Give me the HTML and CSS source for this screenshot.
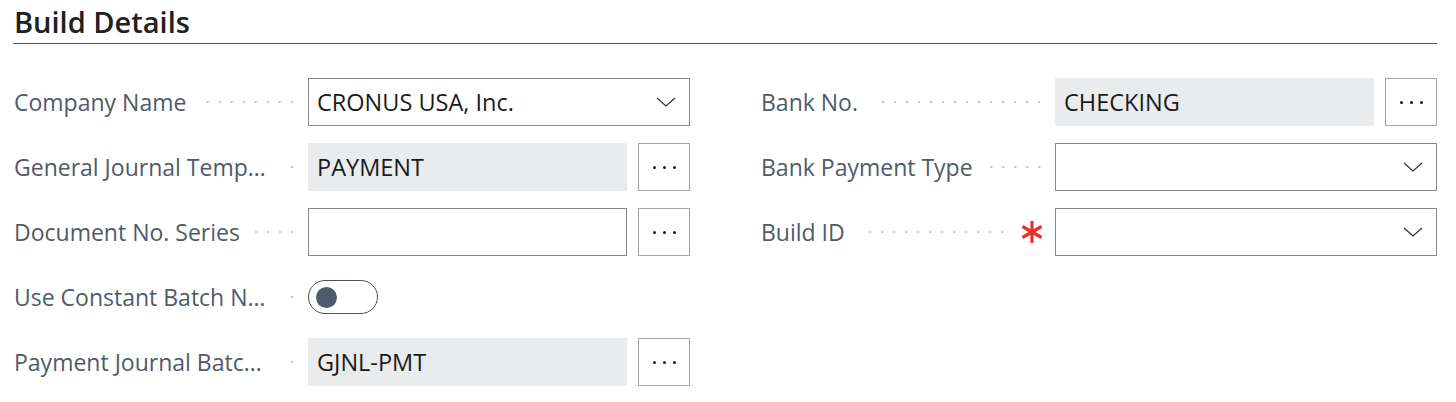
FILE: index.html
```html
<!DOCTYPE html>
<html lang="en">
<head>
<meta charset="utf-8">
<title>Build Details</title>
<link rel="stylesheet" href="styles.css">
</head>
<body>
<div class="page">
  <h2 class="title">Build Details</h2>
  <div class="cols">
    <div class="col">
      <div class="row">
        <div class="lbl"><span class="txt">Company Name</span><span class="lead"></span></div>
        <div class="ctl">
          <div class="select"><span class="val">CRONUS USA, Inc.</span>
            <svg class="chev" viewBox="0 0 20 10" width="20" height="10"><path d="M1 1 L10 9 L19 1" fill="none" stroke="#323130" stroke-width="1.2"/></svg>
          </div>
        </div>
      </div>
      <div class="row">
        <div class="lbl"><span class="txt">General Journal Template Name</span><span class="lead"></span></div>
        <div class="ctl lookup">
          <div class="ro"><span class="val">PAYMENT</span></div>
          <button class="more" type="button"><span class="dot"></span><span class="dot"></span><span class="dot"></span></button>
        </div>
      </div>
      <div class="row">
        <div class="lbl"><span class="txt">Document No. Series</span><span class="lead"></span></div>
        <div class="ctl lookup">
          <div class="input"></div>
          <button class="more" type="button"><span class="dot"></span><span class="dot"></span><span class="dot"></span></button>
        </div>
      </div>
      <div class="row">
        <div class="lbl"><span class="txt">Use Constant Batch Name</span><span class="lead"></span></div>
        <div class="ctl">
          <div class="toggle"><span class="knob"></span></div>
        </div>
      </div>
      <div class="row">
        <div class="lbl"><span class="txt">Payment Journal Batch Name</span><span class="lead"></span></div>
        <div class="ctl lookup">
          <div class="ro"><span class="val">GJNL-PMT</span></div>
          <button class="more" type="button"><span class="dot"></span><span class="dot"></span><span class="dot"></span></button>
        </div>
      </div>
    </div>
    <div class="col">
      <div class="row">
        <div class="lbl"><span class="txt">Bank No.</span><span class="lead"></span></div>
        <div class="ctl lookup">
          <div class="ro"><span class="val">CHECKING</span></div>
          <button class="more" type="button"><span class="dot"></span><span class="dot"></span><span class="dot"></span></button>
        </div>
      </div>
      <div class="row">
        <div class="lbl"><span class="txt">Bank Payment Type</span><span class="lead"></span></div>
        <div class="ctl">
          <div class="select"><span class="val"></span>
            <svg class="chev" viewBox="0 0 20 10" width="20" height="10"><path d="M1 1 L10 9 L19 1" fill="none" stroke="#323130" stroke-width="1.2"/></svg>
          </div>
        </div>
      </div>
      <div class="row">
        <div class="lbl"><span class="txt">Build ID</span><span class="lead"></span>
          <svg class="req" viewBox="0 0 24 24" width="24" height="24" aria-label="required"><g stroke="#e8302a" stroke-width="3.2" stroke-linecap="butt"><path d="M12 1 V23"/><path d="M2.5 6.5 L21.5 17.5"/><path d="M2.5 17.5 L21.5 6.5"/></g></svg>
        </div>
        <div class="ctl">
          <div class="select"><span class="val"></span>
            <svg class="chev" viewBox="0 0 20 10" width="20" height="10"><path d="M1 1 L10 9 L19 1" fill="none" stroke="#323130" stroke-width="1.2"/></svg>
          </div>
        </div>
      </div>
    </div>
  </div>
</div>
</body>
</html>
```

FILE: styles.css
```css
* { box-sizing: border-box; }
html, body { margin: 0; padding: 0; background: #ffffff; }
body {
  font-family: "Open Sans", "Noto Sans", "Liberation Sans", sans-serif;
  color: #212121;
}
.page {
  width: 1456px;
  padding: 0 19px 0 13px;
}
.title {
  margin: 0;
  font-size: 29px;
  font-weight: 600;
  line-height: 40px;
  padding: 2px 0 1px 1px;
  border-bottom: 1px solid #505a66;
  color: #212121;
}
.cols {
  display: grid;
  grid-template-columns: 676px 676px;
  column-gap: 71px;
  padding-left: 1px;
  margin-top: 34px;
}
.col {
  display: flex;
  flex-direction: column;
  gap: 17px;
}
.row {
  display: grid;
  grid-template-columns: 284px 382px;
  column-gap: 10px;
  height: 48px;
  align-items: center;
}
.lbl {
  display: flex;
  align-items: center;
  min-width: 0;
  font-size: 23px;
  color: #505b6a;
}
.txt {
  white-space: nowrap;
  overflow: hidden;
  text-overflow: ellipsis;
  min-width: 0;
  flex: 0 1 auto;
}
.lead {
  flex: 1 0 14px;
  height: 4px;
  margin-left: 14px;
  background-image: radial-gradient(circle, #c4c4c4 1px, rgba(255,255,255,0) 1.6px);
  background-size: 12px 4px;
  background-repeat: repeat-x;
  background-position: right center;
}
.req {
  flex: 0 0 auto;
  display: block;
  margin-left: 12px;
  margin-right: 1px;
}
.ctl {
  display: flex;
  align-items: center;
  height: 48px;
}
.lookup { gap: 11px; }
.select, .input, .ro {
  height: 48px;
  display: flex;
  align-items: center;
  padding: 0 8px;
  font-size: 23.5px;
  color: #1b1b1b;
}
.select {
  width: 382px;
  border: 1px solid #8a8886;
  justify-content: space-between;
  padding-right: 13px;
}
.input {
  width: 319px;
  border: 1px solid #8a8886;
}
.ro {
  width: 319px;
  background: #eaebed;
  padding-left: 9px;
}
.chev { display: block; }
.more {
  width: 52px;
  height: 48px;
  border: 1px solid #a6a6a6;
  background: #ffffff;
  display: flex;
  align-items: center;
  justify-content: center;
  gap: 7px;
  padding: 0;
  margin: 0;
}
.dot {
  width: 3px;
  height: 3px;
  border-radius: 50%;
  background: #1b1b1b;
}
.toggle {
  width: 70px;
  height: 34px;
  border: 1px solid #4a5260;
  border-radius: 17px;
  display: flex;
  align-items: center;
  padding-left: 7px;
}
.knob {
  width: 21px;
  height: 21px;
  border-radius: 50%;
  background: #4e5a6d;
}
```
